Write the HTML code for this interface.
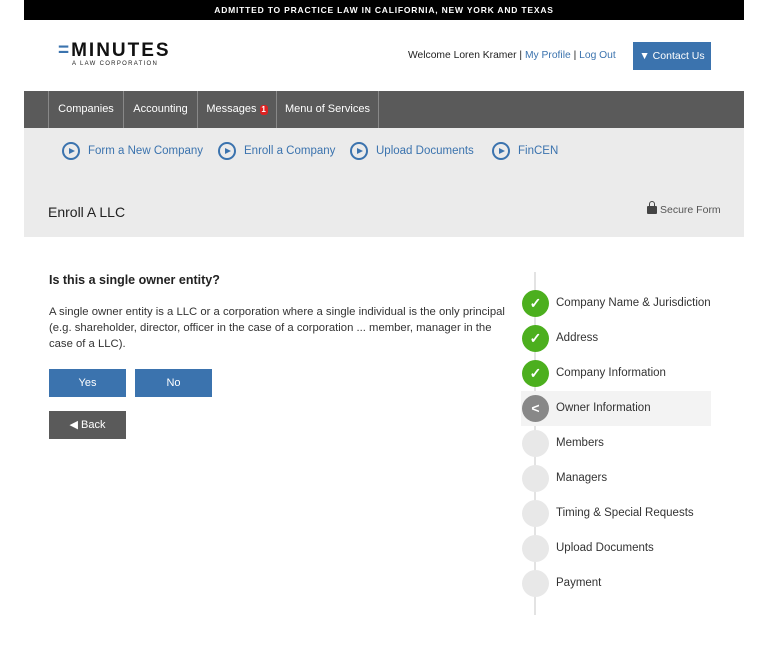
<!DOCTYPE html>
<html><head><style>
*{margin:0;padding:0;box-sizing:border-box}
body{width:768px;height:650px;background:#fff;font-family:"Liberation Sans",sans-serif;color:#222;position:relative;overflow:hidden}
.a{position:absolute}
.top{left:24px;top:0;width:720px;height:20px;background:#000;color:#fff;font-size:8.5px;font-weight:bold;letter-spacing:.8px;text-align:center;line-height:21px}
.nav{left:24px;top:91px;width:720px;height:37px;background:#5a5a5a}
.nav span{position:absolute;top:0;height:37px;line-height:37px;color:#fff;font-size:11px;border-left:1px solid #888;text-align:center;white-space:nowrap}
.sub{left:24px;top:128px;width:720px;height:109px;background:#ebebeb}
.lk{position:absolute;top:14px;font-size:11.5px;color:#3b73ae;display:flex;align-items:center;white-space:nowrap}
.ic{width:18px;height:18px;border:2px solid #3b73ae;border-radius:50%;margin-right:8px;position:relative}
.ic:after{content:"";position:absolute;left:5px;top:4px;border-left:6px solid #3b73ae;border-top:3.5px solid transparent;border-bottom:3.5px solid transparent;}
.btn{position:absolute;height:28px;width:77px;color:#fff;font-size:11px;text-align:center;line-height:28px}
.st{position:absolute;left:521px;width:190px;height:35px;font-size:11.5px;color:#333;line-height:35px;padding-left:35px;white-space:nowrap}
.st i{position:absolute;left:1px;top:4px;width:27px;height:27px;border-radius:50%;background:#e8e8e8;color:#fff;font-style:normal;font-weight:bold;text-align:center;line-height:27px;font-size:14px}
.g i{background:#4caf1e}
</style></head><body>
<div class="a top">ADMITTED TO PRACTICE LAW IN CALIFORNIA, NEW YORK AND TEXAS</div>
<div class="a" style="left:58px;top:40px;font-size:19px;font-weight:bold;letter-spacing:2px;color:#111"><span style="color:#3b73ae">=</span>MINUTES</div>
<div class="a" style="left:72px;top:61px;font-size:6px;letter-spacing:1.3px">A LAW CORPORATION</div>
<div class="a" style="left:408px;top:50px;font-size:10.3px;white-space:nowrap">Welcome Loren Kramer | <span style="color:#3b73ae">My Profile</span> | <span style="color:#3b73ae">Log Out</span></div>
<div class="a" style="left:633px;top:42px;width:78px;height:28px;background:#3b73ae;color:#fff;font-size:10.5px;line-height:28px;text-align:center">▼ Contact Us</div>
<div class="a nav">
<span style="left:24px;width:75px">Companies</span>
<span style="left:99px;width:74px">Accounting</span>
<span style="left:173px;width:79px">Messages <b style="display:inline-block;background:#d22;border-radius:3px;font-size:8px;width:8px;height:10px;line-height:10px">1</b></span>
<span style="left:252px;width:103px;border-right:1px solid #888">Menu of Services</span>
</div>
<div class="a sub">
<div class="lk" style="left:38px"><div class="ic"></div>Form a New Company</div>
<div class="lk" style="left:194px"><div class="ic"></div>Enroll a Company</div>
<div class="lk" style="left:326px"><div class="ic"></div>Upload Documents</div>
<div class="lk" style="left:468px"><div class="ic"></div>FinCEN</div>
<div class="a" style="left:24px;top:76px;font-size:14px;color:#222">Enroll A LLC</div>
<div class="a" style="left:623px;top:76px;font-size:10.5px;color:#555;white-space:nowrap"><span style="display:inline-block;width:10px;height:8px;background:#444;border-radius:1px;margin-right:3px;position:relative;top:1px"><span style="position:absolute;left:2px;top:-5px;width:6px;height:7px;border:1.5px solid #444;border-radius:3px 3px 0 0"></span></span>Secure Form</div>
</div>
<div class="a" style="left:49px;top:273px;font-size:12.5px;font-weight:bold">Is this a single owner entity?</div>
<div class="a" style="left:49px;top:304px;width:462px;font-size:11.3px;line-height:16px;color:#333">A single owner entity is a LLC or a corporation where a single individual is the only principal (e.g. shareholder, director, officer in the case of a corporation ... member, manager in the case of a LLC).</div>
<div class="btn" style="left:49px;top:369px;background:#3b73ae">Yes</div>
<div class="btn" style="left:135px;top:369px;background:#3b73ae">No</div>
<div class="btn" style="left:49px;top:411px;background:#5a5a5a">◀ Back</div>
<div class="a" style="left:534px;top:272px;width:2px;height:343px;background:#e3e3e3"></div>
<div class="st g" style="top:286px"><i>✓</i>Company Name &amp; Jurisdiction</div>
<div class="st g" style="top:321px"><i>✓</i>Address</div>
<div class="st g" style="top:356px"><i>✓</i>Company Information</div>
<div class="st" style="top:391px;background:#f3f3f3"><i style="background:#888">&lt;</i>Owner Information</div>
<div class="st" style="top:426px"><i></i>Members</div>
<div class="st" style="top:461px"><i></i>Managers</div>
<div class="st" style="top:496px"><i></i>Timing &amp; Special Requests</div>
<div class="st" style="top:531px"><i></i>Upload Documents</div>
<div class="st" style="top:566px"><i></i>Payment</div>
</body></html>
